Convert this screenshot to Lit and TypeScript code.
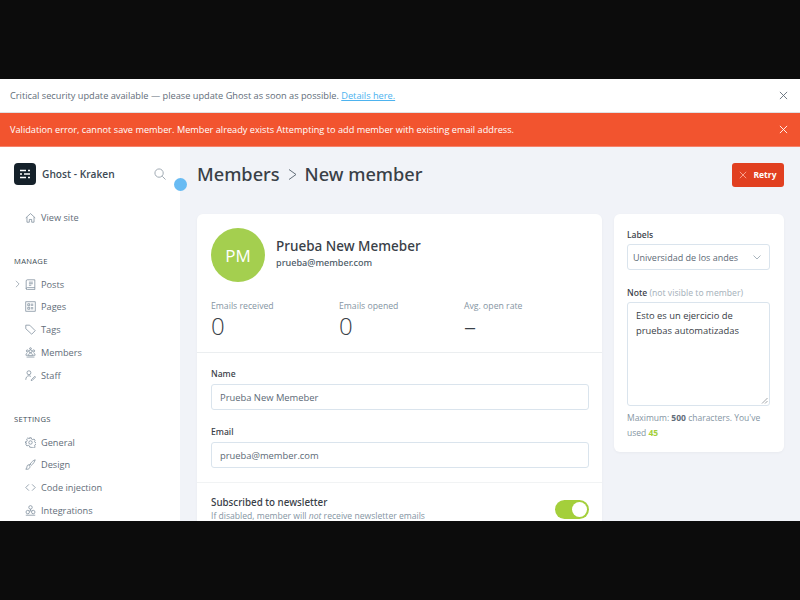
import { LitElement, html, css, svg } from 'lit';
import { customElement } from 'lit/decorators.js';

const closeIcon = html`<svg class="x" viewBox="0 0 10 10"><path d="M1 1l8 8M9 1l-8 8" /></svg>`;

const navIcons: Record<string, unknown> = {
  home: svg`<path d="M1 7.500L7 2l6 5.500M2.500 6.500V13h3V9.500h3V13h3V6.500" />`,
  posts: svg`<path d="M3 1h9.500v10H3a1.500 1.500 0 0 0-1.500 1.500V2.500A1.500 1.500 0 0 1 3 1zM1.500 12.500A1.200 1.200 0 0 0 3 13.500h9.500V11M5 4h5M5 6h5M5 8h3" />`,
  pages: svg`<rect x="1" y="1" width="12" height="12" /><path d="M3.500 3.500h2.500v2.500h-2.500zM3.500 8h2.500v2.500h-2.500zM7.500 4h3M7.500 5.500h3M7.500 8.500h3M7.500 10h3" />`,
  tags: svg`<path d="M1 1.500h5l7 7-4.500 4.500-7.500-7zM3.500 4h.01" />`,
  members: svg`<circle cx="7" cy="5.500" r="1.800" /><circle cx="3" cy="5" r="1.300" /><circle cx="11" cy="5" r="1.300" /><circle cx="7" cy="2" r="1.100" /><path d="M4.500 11c0-2 1-3.500 2.500-3.500s2.500 1.500 2.500 3.500zM3 7.500c-1 .3-1.800 1.300-1.800 3h3M11 7.500c1 .3 1.800 1.300 1.800 3h-3M2 12.800h10" />`,
  staff: svg`<circle cx="5" cy="3.500" r="2.500" /><path d="M1 12.500c0-3.200 1.800-5.200 4-5.200 1 0 1.800.3 2.500 1M8 12.500l4.500-4.500 1 1-4.500 4.500H8z" />`,
  general: svg`<circle cx="7" cy="7" r="2.200" /><path d="M6 1h2l.4 1.700 1.500.7 1.600-.8 1.400 1.400-.8 1.600.7 1.400 1.700.4v2l-1.700.4-.7 1.400.8 1.600-1.400 1.400-1.600-.8-1.500.7L8 13H6l-.4-1.700-1.500-.7-1.600.8-1.400-1.400.8-1.600-.7-1.400L.5 8V6l1.700-.4.7-1.400-.8-1.600 1.400-1.400 1.600.8 1.500-.7z" />`,
  design: svg`<path d="M13 1c-2 .5-5 3-6.500 5.500l1.500 1.500C10.500 6.500 12.500 3 13 1zM6.500 6.500L5 8M5.500 7.500c-2-.5-3 1-3 2.500 0 1-.5 2-1.500 3 2.500.5 4.500-.5 5-2 .5-1 .5-2 0-2.500z" />`,
  code: svg`<path d="M5 3L1 7l4 4M9 3l4 4-4 4" />`,
  integrations: svg`<circle cx="7" cy="3" r="2.200" /><circle cx="3.500" cy="9" r="2.200" /><circle cx="10.500" cy="9" r="2.200" /><path d="M1 13h12M7 5.200v2M5.500 7.500h3" />`,
};

function navItem(label: string, icon: string, caret = false) {
  return html`
    <li class="nav-item">
      <span class="caret">${caret ? html`<svg viewBox="0 0 6 10"><path d="M1 1l4 4-4 4" /></svg>` : ''}</span>
      <svg class="nav-icon" viewBox="0 0 14 14">${navIcons[icon]}</svg>
      <span>${label}</span>
    </li>
  `;
}

@customElement('app-root')
export class AppRoot extends LitElement {
  static styles = css`
    :host {
      display: block;
      width: 800px;
      height: 600px;
      background: #0c0c0c;
      font-family: 'Open Sans', 'Noto Sans', sans-serif;
      padding: 79px 0;
      box-sizing: border-box;
      overflow: hidden;
    }
    .frame {
      height: 442px;
      display: flex;
      flex-direction: column;
      overflow: hidden;
      background: #f1f3f8;
      position: relative;
    }
    .bar {
      flex: none;
      display: flex;
      align-items: center;
      justify-content: space-between;
      padding: 0 12px 0 10px;
      font-size: 9.200px;
      box-sizing: border-box;
      height: 34px;
    }
    .bar.update {
      background: #fff;
      color: #626d79;
      font-size: 9.230px;
      border-bottom: 1px solid #dfe1e4;
    }
    .bar.update a {
      color: #4db3ef;
      text-decoration: underline;
    }
    .bar.error {
      background: #f2542f;
      color: #fff;
      border-bottom: 1px solid #f6826a;
    }
    .x {
      width: 9px;
      height: 9px;
      fill: none;
      stroke: currentColor;
      stroke-width: 1;
    }
    .update .x {
      color: #626d79;
    }
    .body {
      flex: 1;
      min-height: 0;
      display: flex;
    }
    .side {
      width: 180px;
      flex: none;
      background: #fff;
      padding: 16px 0 0 14px;
      box-sizing: border-box;
      overflow: hidden;
    }
    .brand {
      display: flex;
      align-items: center;
      height: 22px;
      padding-right: 14px;
    }
    .logo {
      width: 22px;
      height: 22px;
      border-radius: 4px;
      background: #15212a;
      margin-right: 6px;
      flex: none;
    }
    .logo svg {
      display: block;
      width: 22px;
      height: 22px;
      stroke: #fff;
      stroke-width: 1.500;
      fill: none;
    }
    .brand b {
      font-size: 10.200px;
      font-weight: 600;
      color: #3c4a54;
      flex: 1;
    }
    .search {
      width: 12px;
      height: 12px;
      fill: none;
      stroke: #98a3ad;
      stroke-width: 1;
    }
    ul {
      list-style: none;
      margin: 0;
      padding: 0;
    }
    .view {
      margin-top: 21px;
    }
    .nav-item {
      height: 22.800px;
      display: flex;
      align-items: center;
      font-size: 9.200px;
      color: #626d79;
    }
    .caret {
      width: 11px;
      flex: none;
      display: flex;
    }
    .caret svg {
      width: 5px;
      height: 8px;
      margin-left: 1px;
      fill: none;
      stroke: #98a3ad;
      stroke-width: 1;
    }
    .nav-icon {
      width: 11px;
      height: 11px;
      margin-right: 5px;
      flex: none;
      fill: none;
      stroke: #738494;
      stroke-width: 0.900;
    }
    h4 {
      margin: 0;
      font-size: 7.600px;
      font-weight: 400;
      letter-spacing: 0.3px;
      color: #3c4a54;
    }
    .manage {
      margin-top: 27px;
      margin-bottom: 7px;
    }
    .settings {
      margin-top: 27px;
      margin-bottom: 7px;
    }
    .dot {
      position: absolute;
      left: 174px;
      top: 99px;
      width: 13px;
      height: 13px;
      border-radius: 50%;
      background: #68bbf3;
    }
    .main {
      flex: 1;
      min-width: 0;
      padding: 15px 16px 0 17px;
      overflow: hidden;
    }
    .head {
      display: flex;
      align-items: center;
      justify-content: space-between;
      height: 25px;
    }
    .crumbs {
      display: flex;
      align-items: center;
      font-family: 'Noto Sans', sans-serif;
      font-size: 18.200px;
      line-height: 23px;
      font-weight: 500;
      color: #394047;
    }
    .crumbs svg {
      width: 9px;
      height: 11px;
      margin: 0 8px;
      fill: none;
      stroke: #626d79;
      stroke-width: 1;
    }
    .retry {
      width: 52px;
      height: 24px;
      display: flex;
      align-items: center;
      justify-content: center;
      gap: 6px;
      background: #e13f20;
      border-radius: 3px;
      color: #fff;
      font-size: 8.500px;
      font-weight: 700;
    }
    .retry .x {
      width: 8px;
      height: 8px;
      stroke: #ffb6a6;
    }
    .grid {
      margin-top: 27px;
      display: flex;
      align-items: flex-start;
      gap: 12px;
    }
    .card {
      background: #fff;
      border-radius: 6px;
      box-shadow: 0 1px 3px rgba(0, 0, 0, 0.04);
    }
    .member {
      width: 405px;
      flex: none;
      height: 400px;
    }
    .aside {
      width: 170px;
      height: 238px;
      flex: none;
      padding: 14px 14px 0 13px;
      box-sizing: border-box;
    }
    .who {
      padding: 14px 14px 0;
      display: flex;
      align-items: center;
      gap: 11px;
    }
    .avatar {
      width: 54px;
      height: 54px;
      border-radius: 50%;
      background: #a4cf4f;
      color: #fff;
      font-size: 17px;
      display: flex;
      align-items: center;
      justify-content: center;
    }
    .who h2 {
      margin: 0;
      font-family: 'Noto Sans', sans-serif;
      font-size: 13.500px;
      font-weight: 500;
      line-height: 18px;
      color: #394047;
    }
    .who p {
      margin: 1px 0 3px;
      font-family: 'Noto Sans', sans-serif;
      font-size: 9.100px;
      font-weight: 500;
      color: #4c5a66;
      line-height: 14px;
    }
    .stats {
      display: grid;
      grid-template-columns: 128px 125px 1fr;
      padding: 18px 14px 0;
      border-bottom: 1px solid #ebeef0;
      box-sizing: border-box;
      height: 71px;
    }
    .stats label {
      display: block;
      font-size: 8.700px;
      line-height: 12px;
      color: #8595a3;
    }
    .stats span {
      display: block;
      font-size: 24px;
      line-height: 28px;
      font-weight: 300;
      color: #394047;
    }
    .fields {
      padding: 14px 13px 0 14px;
      height: 130px;
      box-sizing: border-box;
      border-bottom: 1px solid #f1f3f4;
    }
    .field-label {
      display: block;
      font-family: 'Noto Sans', sans-serif;
      font-size: 8.600px;
      line-height: 14px;
      font-weight: 500;
      color: #394047;
      margin-bottom: 3px;
    }
    .input {
      height: 26px;
      border: 1px solid #dae4ed;
      border-radius: 3px;
      box-sizing: border-box;
      display: flex;
      align-items: center;
      padding-left: 8px;
      font-size: 9.400px;
      color: #5d6a76;
    }
    .input + .field-label {
      margin-top: 15px;
    }
    .sub {
      padding: 13px 13px 13px 14px;
      display: flex;
      align-items: center;
      justify-content: space-between;
    }
    .sub b {
      display: block;
      font-family: 'Noto Sans', sans-serif;
      font-size: 9.800px;
      line-height: 14px;
      font-weight: 500;
      color: #394047;
    }
    .sub small {
      display: block;
      font-size: 8.600px;
      line-height: 12px;
      color: #8595a3;
    }
    .toggle {
      width: 34px;
      height: 19px;
      border-radius: 10px;
      background: #a4cf3b;
      display: flex;
      justify-content: flex-end;
      align-items: center;
      padding-right: 2px;
      box-sizing: border-box;
    }
    .toggle i {
      width: 15px;
      height: 15px;
      border-radius: 50%;
      background: #fff;
    }
    .aside .field-label {
      margin-bottom: 2px;
    }
    .select {
      justify-content: space-between;
      padding: 0 8px 0 5px;
      font-size: 9px;
    }
    .select svg {
      width: 8px;
      height: 5px;
      fill: none;
      stroke: #a9b4bd;
      stroke-width: 1;
    }
    .aside .note-label {
      margin-top: 16px;
    }
    .note-label em {
      font-style: normal;
      font-weight: 400;
      color: #a9b4bd;
    }
    .note {
      height: 104px;
      border: 1px solid #dae4ed;
      border-radius: 3px;
      box-sizing: border-box;
      padding: 5px 8px;
      font-size: 9.400px;
      line-height: 15px;
      color: #394047;
      position: relative;
    }
    .note svg {
      position: absolute;
      right: 1px;
      bottom: 1px;
      width: 7px;
      height: 7px;
      fill: none;
      stroke: #8a8f94;
      stroke-width: 0.800;
    }
    .hint {
      margin: 4px 0 0;
      font-size: 8.500px;
      line-height: 15px;
      color: #8595a3;
    }
    .hint b {
      color: #626d79;
    }
    .hint .used {
      color: #a4cf3b;
    }
  `;

  render() {
    return html`
      <div class="frame">
        <div class="bar update">
          <span>Critical security update available — please update Ghost as soon as possible. <a>Details here.</a></span>
          ${closeIcon}
        </div>
        <div class="bar error">
          <span>Validation error, cannot save member. Member already exists Attempting to add member with existing email address.</span>
          ${closeIcon}
        </div>
        <div class="body">
          <nav class="side">
            <div class="brand">
              <span class="logo"><svg viewBox="0 0 22 22"><path d="M6 7.500h6M14 7.500h2M6 11h2M10 11h6M6 14.500h6M14 14.500h2" /></svg></span>
              <b>Ghost - Kraken</b>
              <svg class="search" viewBox="0 0 13 13"><circle cx="5.500" cy="5.500" r="4.500" /><path d="M9 9l3.500 3.500" /></svg>
            </div>
            <ul class="view">${navItem('View site', 'home')}</ul>
            <h4 class="manage">MANAGE</h4>
            <ul>
              ${navItem('Posts', 'posts', true)} ${navItem('Pages', 'pages')} ${navItem('Tags', 'tags')}
              ${navItem('Members', 'members')} ${navItem('Staff', 'staff')}
            </ul>
            <h4 class="settings">SETTINGS</h4>
            <ul>
              ${navItem('General', 'general')} ${navItem('Design', 'design')} ${navItem('Code injection', 'code')}
              ${navItem('Integrations', 'integrations')}
            </ul>
          </nav>
          <main class="main">
            <div class="head">
              <div class="crumbs">
                Members<svg viewBox="0 0 9 11"><path d="M1 .500l7 5-7 5" /></svg>New member
              </div>
              <div class="retry">${closeIcon}<span>Retry</span></div>
            </div>
            <div class="grid">
              <section class="card member">
                <div class="who">
                  <div class="avatar">PM</div>
                  <div>
                    <h2>Prueba New Memeber</h2>
                    <p>prueba@member.com</p>
                  </div>
                </div>
                <div class="stats">
                  <div><label>Emails received</label><span>0</span></div>
                  <div><label>Emails opened</label><span>0</span></div>
                  <div><label>Avg. open rate</label><span>–</span></div>
                </div>
                <div class="fields">
                  <span class="field-label">Name</span>
                  <div class="input">Prueba New Memeber</div>
                  <span class="field-label">Email</span>
                  <div class="input">prueba@member.com</div>
                </div>
                <div class="sub">
                  <div>
                    <b>Subscribed to newsletter</b>
                    <small>If disabled, member will <em>not</em> receive newsletter emails</small>
                  </div>
                  <div class="toggle"><i></i></div>
                </div>
              </section>
              <section class="card aside">
                <span class="field-label">Labels</span>
                <div class="input select">
                  Universidad de los andes
                  <svg viewBox="0 0 8 5"><path d="M.5.500L4 4 7.500.500" /></svg>
                </div>
                <span class="field-label note-label">Note <em>(not visible to member)</em></span>
                <div class="note">
                  Esto es un ejercicio de pruebas automatizadas
                  <svg viewBox="0 0 7 7"><path d="M6.500 1L1 6.500M6.500 4L4 6.500" /></svg>
                </div>
                <p class="hint">Maximum: <b>500</b> characters. You've used <b class="used">45</b></p>
              </section>
            </div>
          </main>
        </div>
        <div class="dot"></div>
      </div>
    `;
  }
}
